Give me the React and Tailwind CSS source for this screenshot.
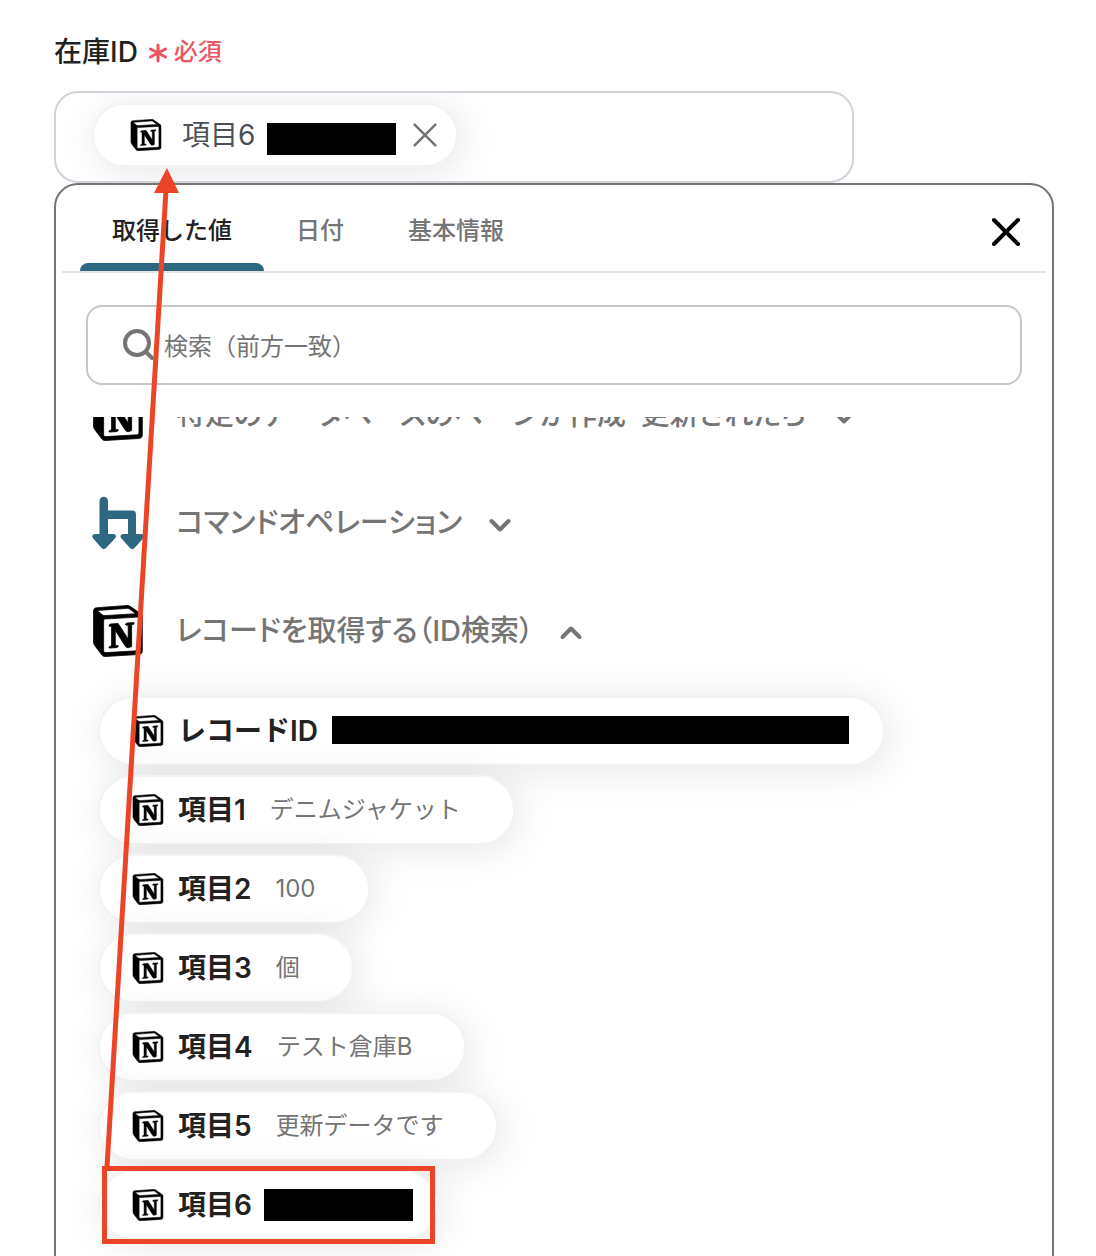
import React, { useState } from "react";

const items = [
  { name: "レコードID", redacted: true },
  { name: "項目1", value: "デニムジャケット" },
  { name: "項目2", value: "100" },
  { name: "項目3", value: "個" },
  { name: "項目4", value: "テスト倉庫B" },
  { name: "項目5", value: "更新データです" },
];

const tabs = ["取得した値", "日付", "基本情報"];

function NotionIcon({ className }) {
  return (
    <svg viewBox="0 -1 96 102" className={className} aria-hidden="true">
      <path
        fill="#fff"
        d="M6 4.3 61.4.2c6.8-.6 8.5-.2 12.8 2.9l17.6 12.5c2.9 2.1 3.9 2.7 3.9 5v68.3c0 4.3-1.5 6.8-7 7.2L24.5 100c-4.1.2-6-.4-8.2-3.1L3.3 80C1 76.8 0 74.5 0 71.8V11.1c0-3.5 1.5-6.4 6-6.8z"
      />
      <path
        fillRule="evenodd"
        stroke="#000"
        strokeWidth="1.5"
        d="M61.35.227 6.017 4.314C1.553 4.7 0 7.617 0 11.113v60.66c0 2.723.967 5.053 3.3 8.167l13.007 16.913c2.137 2.723 4.08 3.307 8.16 3.113l64.257-3.89c5.433-.387 6.99-2.917 6.99-7.193V20.64c0-2.21-.873-2.847-3.443-4.733L74.167 3.143c-4.273-3.107-6.02-3.5-12.817-2.917zM25.92 19.523c-5.247.353-6.437.433-9.417-1.99L8.927 11.507c-.77-.78-.383-1.753 1.557-1.947l53.193-3.887c4.467-.39 6.793 1.167 8.54 2.527l9.123 6.61c.39.197 1.36 1.36.193 1.36l-54.933 3.307-.68.047zM19.803 88.3V30.367c0-2.53.777-3.697 3.103-3.893L86 22.78c2.14-.193 3.107 1.167 3.107 3.693v57.547c0 2.53-.39 4.67-3.883 4.863l-60.377 3.5c-3.493.193-5.043-.97-5.043-4.083zm59.6-54.827c.387 1.75 0 3.5-1.75 3.7l-2.91.577v42.773c-2.527 1.36-4.853 2.137-6.797 2.137-3.107 0-3.883-.973-6.21-3.887l-19.03-29.94v28.967l6.02 1.363s0 3.5-4.857 3.5l-13.39.777c-.39-.78 0-2.723 1.357-3.11l3.497-.97v-38.3L30.48 40.667c-.39-1.75.58-4.277 3.3-4.473l14.367-.967 19.8 30.327v-26.83l-5.047-.58c-.39-2.143 1.163-3.7 3.103-3.89l13.4-.78z"
      />
    </svg>
  );
}

function CommandIcon({ className }) {
  return (
    <svg viewBox="0 0 52 54" className={className} fill="#2d6880" aria-hidden="true">
      <path d="M7.500 5a4 4 0 0 1 8.500 0v9.500h24a4 4 0 0 1 4 4V38h5c3 0 4 2.500 2 4.500L42.500 52c-1.500 1.500-3 1.500-4.500 0l-8.500-9.500c-2-2-1-4.500 2-4.500H36V23H16v15h5c3 0 4 2.500 2 4.500L14 52c-1.500 1.500-3 1.500-4.500 0L1.300 42.500c-2-2-1-4.500 2-4.500h4.200z" />
    </svg>
  );
}

function Chevron({ up }) {
  return (
    <svg viewBox="0 0 24 16" className="mt-1 h-4 w-6 shrink-0" fill="none" stroke="#757575" strokeWidth="4" strokeLinecap="round" strokeLinejoin="round" aria-hidden="true">
      {up ? <path d="M3.500 12 12 3.500l8.500 8.500" /> : <path d="M3.500 4 12 12.500 20.500 4" />}
    </svg>
  );
}

function Cross({ className, width }) {
  return (
    <svg viewBox="0 0 30 30" className={className} fill="none" stroke="currentColor" strokeWidth={width} strokeLinecap="round" aria-hidden="true">
      <path d="M3 3l24 24M27 3 3 27" />
    </svg>
  );
}

function Group({ icon, title, open, onClick }) {
  return (
    <button type="button" onClick={onClick} aria-expanded={open} className="flex h-[52px] w-full items-center text-left">
      {icon}
      <span className="ml-8 mr-[26px] text-[29px] leading-10 font-medium text-[#757575] [font-feature-settings:'palt']">{title}</span>
      <Chevron up={open} />
    </button>
  );
}

function Pill({ item }) {
  return (
    <button type="button" className="flex h-[70px] items-center rounded-full border-2 border-[#f3f3f3] bg-white pl-8 pr-[34px] shadow-[4px_4px_40px_rgba(0,0,0,0.10)]">
      <NotionIcon className="h-8 w-8 shrink-0" />
      <span className="ml-3.5 text-[28px] leading-10 font-semibold text-[#222]">{item.name}</span>
      {item.redacted ? (
        <span className="mb-0.5 ml-3.5 h-7 w-[517px] bg-black" />
      ) : (
        <span className="ml-6 mr-[18px] text-2xl text-[#757575]">{item.value}</span>
      )}
    </button>
  );
}

function App() {
  const [tab, setTab] = useState(0);
  const [open, setOpen] = useState(true);
  const [selected, setSelected] = useState(true);

  return (
    <div className="relative h-screen overflow-hidden bg-white px-[54px] pr-[42px] pt-8 font-['Inter','Noto_Sans_CJK_JP',sans-serif]">
      <div className="flex h-10 items-center">
        <span id="stock" className="text-[28px] font-medium text-[#222]">在庫ID</span>
        <svg viewBox="0 0 20 20" className="mt-0.5 ml-2.5 h-5 w-5" stroke="#eb5560" strokeWidth="3" strokeLinecap="round" aria-hidden="true">
          <path d="M10 2v16M2.500 6l15 8M17.500 6l-15 8" />
        </svg>
        <span className="ml-1.5 text-2xl font-medium text-[#eb5560]">必須</span>
      </div>

      <div role="group" aria-labelledby="stock" className="mt-[19px] flex h-[92px] w-4/5 items-center overflow-hidden rounded-3xl border-2 border-[#ced4da] px-9">
        {selected && (
          <div className="mb-1 flex h-[64px] items-center rounded-full border-2 border-[#f3f3f3] bg-white pl-9 pr-[18px] shadow-[4px_4px_40px_rgba(0,0,0,0.10)]">
            <NotionIcon className="h-8 w-8 shrink-0" />
            <span className="ml-5 text-[28px] leading-10 text-[#495057]">項目6</span>
            <span className="ml-3 mt-2 h-8 w-[129px] bg-black" />
            <button type="button" aria-label="削除" onClick={() => setSelected(false)} className="ml-4 text-[#757575]">
              <Cross className="h-[26px] w-[26px]" width={3} />
            </button>
          </div>
        )}
      </div>

      <div className="h-[1200px] rounded-3xl border-2 border-[#757575] bg-white px-1.5">
        <div className="flex h-[88px] items-start border-b-2 border-[#e5e5e5] pr-[25px] pl-[18px]">
          <div role="tablist" className="flex h-full">
            {tabs.map((name, i) => (
              <button
                key={name}
                type="button"
                role="tab"
                aria-selected={tab === i}
                onClick={() => setTab(i)}
                className={
                  tab === i
                    ? "flex h-full flex-col items-center text-2xl font-medium text-[#222]"
                    : "flex h-full flex-col items-center text-2xl font-medium text-[#757575]"
                }
              >
                <span className="mt-[30px] px-8">{name}</span>
                {tab === i && <span className="mt-auto h-2 w-full rounded-t-lg bg-[#2d6880]" />}
              </button>
            ))}
          </div>
          <button type="button" aria-label="閉じる" className="mt-8 ml-auto text-black">
            <Cross className="h-[30px] w-[30px]" width={4} />
          </button>
        </div>

        <label className="mx-6 mt-8 flex h-20 items-center rounded-2xl border-2 border-[#c7c7c7] px-8">
          <svg viewBox="0 0 36 36" className="h-9 w-9 shrink-0" fill="none" stroke="#757575" strokeWidth="4" strokeLinecap="round" aria-hidden="true">
            <circle cx="17" cy="16" r="12" />
            <path d="m26 25 6 6" />
          </svg>
          <input
            type="text"
            aria-label="検索"
            placeholder="検索（前方一致）"
            className="ml-2 w-full pt-1 text-2xl text-[#757575] outline-none placeholder:text-[#757575]"
          />
        </label>

        <div className="mt-8 flex h-[850px] flex-col overflow-hidden">
          <div className="-mt-7 flex flex-col gap-14 pl-[30px]">
            <Group icon={<NotionIcon className="h-[52px] w-[52px] shrink-0" />} title="特定のデータベースのページが作成・更新されたら" open={false} />
            <Group icon={<CommandIcon className="h-[54px] w-[52px] shrink-0" />} title="コマンドオペレーション" open={false} />
            <Group icon={<NotionIcon className="h-[52px] w-[52px] shrink-0" />} title="レコードを取得する（ID検索）" open={open} onClick={() => setOpen(!open)} />
          </div>
          {open && (
            <div className="mt-[39px] flex flex-col items-start gap-[9px] pl-9">
              {items.map((item) => (
                <Pill key={item.name} item={item} />
              ))}
              {/* the highlighted row, start of the arrow */}
              <div className="relative">
                <button type="button" className="flex h-[70px] items-center rounded-full border-2 border-[#f3f3f3] bg-white pl-8 pr-6 shadow-[4px_4px_40px_rgba(0,0,0,0.10)]">
                  <NotionIcon className="h-8 w-8 shrink-0" />
                  <span className="ml-3.5 text-[28px] leading-10 font-semibold text-[#222]">項目6</span>
                  <span className="ml-3 h-8 w-[149px] bg-black" />
                </button>
                <span className="absolute -top-1 right-1 -bottom-1 left-1 border-[5px] border-[#ec4427]" />
              </div>
            </div>
          )}
        </div>
      </div>

      <svg viewBox="0 0 80 1000" className="pointer-events-none absolute top-[168px] left-[100px] h-[1000px] w-20" fill="#ec4427" aria-hidden="true">
        <path d="M67 0 79 25H54z" />
        <path d="M66 22 7 999" stroke="#ec4427" strokeWidth="5" />
      </svg>
    </div>
  );
}

export default App;
